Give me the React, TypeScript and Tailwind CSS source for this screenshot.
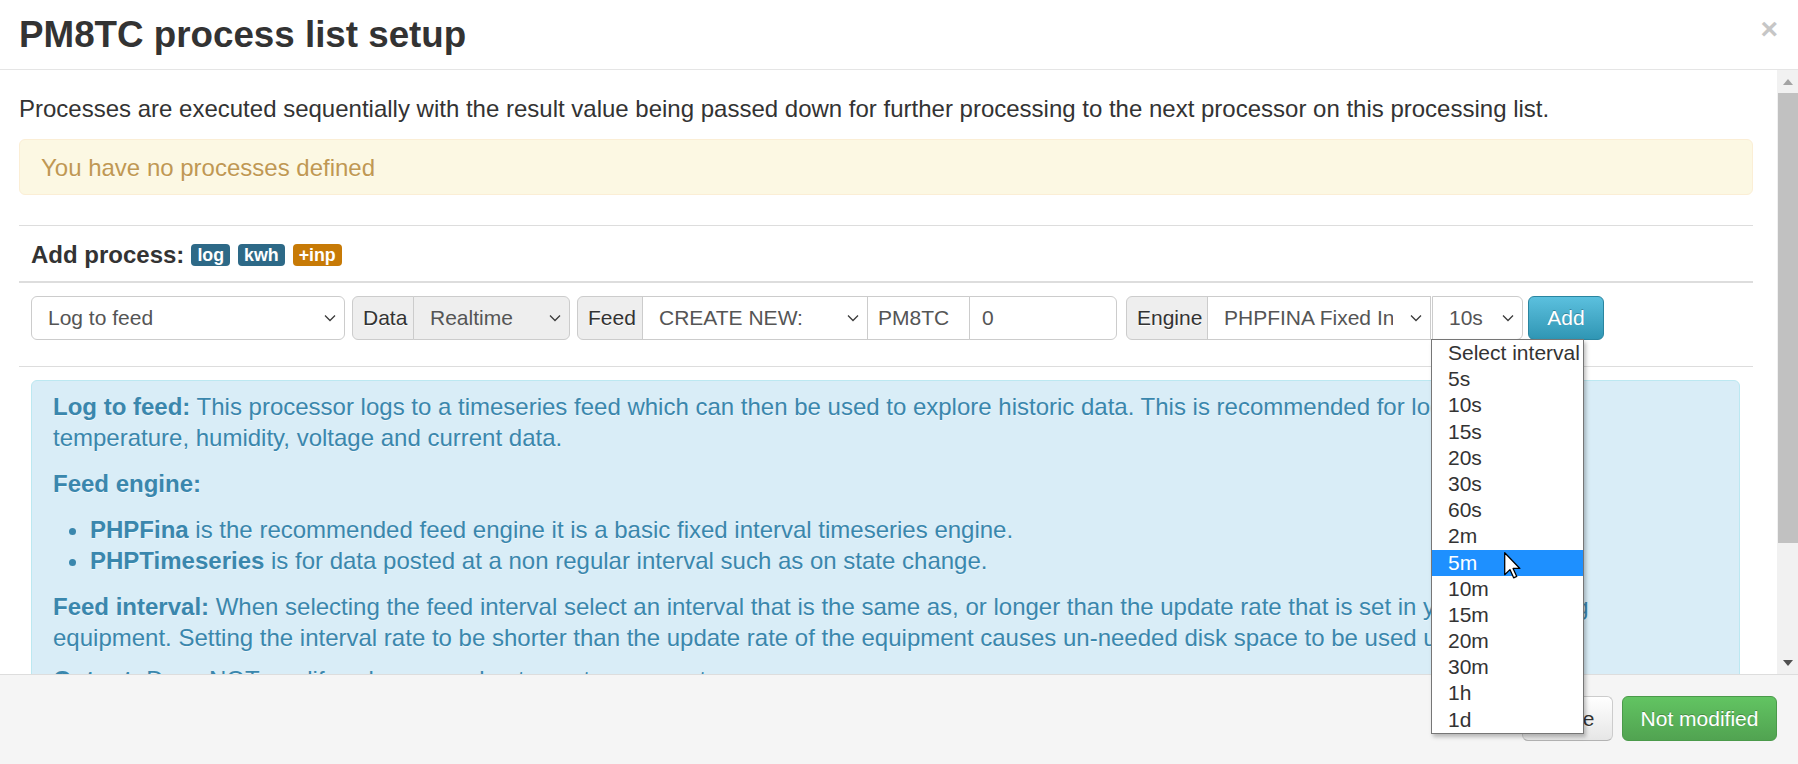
import React from "react";

// --- data ---
const INTERVALS = ["Select interval", "5s", "10s", "15s", "20s", "30s", "60s", "2m", "5m", "10m", "15m", "20m", "30m", "1h", "1d"];
const HOVERED = "5m";

function Chevron() {
  return (
    <svg width="12" height="8" viewBox="0 0 12 8" className="shrink-0">
      <path d="M1 1.5 L6 6.5 L11 1.5" stroke="#3b3b3b" strokeWidth="1.3" fill="none" />
    </svg>
  );
}

function Addon({ label, w }: { label: string; w: string }) {
  return (
    <div className={`${w} h-[44px] shrink-0 flex items-center pl-[10px] bg-[#eeeeee] border border-[#cccccc] rounded-l-[6px] text-[#333] [text-shadow:0_1px_0_#fff]`}>
      {label}
    </div>
  );
}

function Select({ text, w, textW, className = "" }: { text: string; w: string; textW?: string; className?: string }) {
  return (
    <div className={`${w} h-[44px] shrink-0 flex items-center justify-between pl-[16px] pr-[8px] border border-[#cccccc] text-[#555] ${className}`}>
      <span className={`${textW ?? ""} overflow-hidden whitespace-nowrap`}>{text}</span>
      <Chevron />
    </div>
  );
}

function TextBox({ value, w, className = "" }: { value: string; w: string; className?: string }) {
  return (
    <div className={`${w} h-[44px] shrink-0 flex items-center pl-[10px] border border-[#cccccc] bg-white text-[#555] ${className}`}>
      {value}
    </div>
  );
}

function Badge({ text, color }: { text: string; color: string }) {
  return (
    <span className={`${color} text-white font-bold text-[17.8px] leading-[20px] px-[6px] py-[1px] rounded-[4px]`}>{text}</span>
  );
}

function Scrollbar() {
  return (
    <div className="w-[21px] shrink-0 bg-[#f1f1f1] flex flex-col items-center">
      <div className="h-[23px] w-full flex items-center justify-center">
        <svg width="10" height="6" viewBox="0 0 10 6"><path d="M0 6 L5 0 L10 6 Z" fill="#a3a3a3" /></svg>
      </div>
      <div className="w-[20px] ml-[1px] h-[450px] bg-[#c1c1c1]" />
      <div className="flex-1" />
      <div className="h-[23px] w-full flex items-center justify-center">
        <svg width="10" height="6" viewBox="0 0 10 6"><path d="M0 0 L5 6 L10 0 Z" fill="#505050" /></svg>
      </div>
    </div>
  );
}

export default function App() {
  return (
    <div className="relative w-[1798px] h-[764px] overflow-hidden bg-white font-['Liberation_Sans',Arial,sans-serif] text-[21px] leading-[30px] text-[#333]">
      {/* header */}
      <header className="h-[70px] border-b border-[#e5e5e5] flex items-center justify-between pl-[19px] pr-[20px]">
        <h3 className="text-[36.75px] font-bold leading-[60px] text-[#333]">PM8TC process list setup</h3>
        <span className="text-[30px] font-bold leading-none text-[#c6c6c6] -mt-[11px]">×</span>
      </header>

      {/* body */}
      <div className="flex h-[604px]">
        <div className="flex-1 overflow-hidden pl-[19px] pr-[24px] pt-[23px] text-[24px] leading-[31px]">
          <p className="mb-[15px]">
            Processes are executed sequentially with the result value being passed down for further processing to the next processor on this processing list.
          </p>
          <div className="h-[56px] flex items-center pl-[21px] pr-[52px] bg-[#fcf8e3] border border-[#fbeed5] rounded-[6px] text-[#c09853] [text-shadow:0_1px_0_rgba(255,255,255,0.5)]">
            You have no processes defined
          </div>

          <div className="mt-[30px] border-t border-[#dddddd] h-[56px] flex items-center gap-[7px] pl-[12px] pt-[2px]">
            <span className="font-bold text-[#333]">Add process:</span>
            <div className="flex items-center gap-[8px]">
              <Badge text="log" color="bg-[#2d6987]" />
              <Badge text="kwh" color="bg-[#2d6987]" />
              <Badge text="+inp" color="bg-[#c77a06]" />
            </div>
          </div>

          <div className="border-t-2 border-[#dddddd] pt-[13px] pb-[26px] pl-[12px] flex items-center text-[21px] leading-[30px]">
            <Select text="Log to feed" w="w-[314px]" className="rounded-[6px] bg-white" />
            <div className="flex ml-[7px]">
              <Addon label="Data" w="w-[62px]" />
              <Select text="Realtime" w="w-[157px]" className="-ml-px rounded-r-[6px] bg-[#eeeeee]" />
            </div>
            <div className="flex ml-[7px]">
              <Addon label="Feed" w="w-[66px]" />
              <Select text="CREATE NEW:" w="w-[226px]" className="-ml-px bg-white" />
              <TextBox value="PM8TC" w="w-[103px]" className="-ml-px" />
              <TextBox value="0" w="w-[148px]" className="-ml-px rounded-r-[6px] pl-[12px]" />
            </div>
            <div className="flex ml-[9px]">
              <Addon label="Engine" w="w-[82px]" />
              <Select text="PHPFINA Fixed Interval" textW="w-[169px]" w="w-[224px]" className="-ml-px bg-white" />
              <Select text="10s" w="w-[91px]" className="ml-[1px] rounded-r-[6px] bg-white" />
            </div>
            <button className="ml-[5px] w-[76px] h-[44px] rounded-[6px] text-white border border-[#2a85a0] bg-gradient-to-b from-[#5bc0de] to-[#2f96b4] [text-shadow:0_-1px_0_rgba(0,0,0,0.25)]">
              Add
            </button>
          </div>

          <div className="border-t border-[#dddddd] pt-[13px] px-[12px] pr-[13px]">
            <div className="bg-[#d9edf7] border border-[#bce8f1] rounded-[6px] pt-[10px] pl-[21px] pr-[52px] text-[#3a87ad] [text-shadow:0_1px_0_rgba(255,255,255,0.5)]">
              <p className="mb-[15px]">
                <strong>Log to feed:</strong> This processor logs to a timeseries feed which can then be used to explore historic data. This is recommended for logging power, temperature, humidity, voltage and current data.
              </p>
              <p className="mb-[15px]"><strong>Feed engine:</strong></p>
              <ul className="mb-[15px] pl-[37px] list-disc">
                <li><strong>PHPFina</strong> is the recommended feed engine it is a basic fixed interval timeseries engine.</li>
                <li><strong>PHPTimeseries</strong> is for data posted at a non regular interval such as on state change.</li>
              </ul>
              <p className="mb-[11px]">
                <strong>Feed interval:</strong> When selecting the feed interval select an interval that is the same as, or longer than the update rate that is set in your monitoring equipment. Setting the interval rate to be shorter than the update rate of the equipment causes un-needed disk space to be used up.
              </p>
              <p className="mb-[15px]"><strong>Output:</strong> Does NOT modify value passed onto next process step.</p>
            </div>
          </div>
        </div>
        <Scrollbar />
      </div>

      {/* footer */}
      <footer className="h-[90px] bg-[#f5f5f5] border-t border-[#dddddd] flex justify-end items-start gap-[9px] pt-[21px] pr-[21px]">
        <button className="w-[91px] h-[45px] rounded-[6px] border border-[#cccccc] border-b-[#b3b3b3] bg-gradient-to-b from-white to-[#e6e6e6] text-[#333] [text-shadow:0_1px_1px_rgba(255,255,255,0.75)]">
          Close
        </button>
        <button className="w-[155px] h-[45px] rounded-[6px] border border-[#4a9a4a] bg-gradient-to-b from-[#62c462] to-[#51a351] text-white [text-shadow:0_-1px_0_rgba(0,0,0,0.25)]">
          Not modified
        </button>
      </footer>

      {/* open select popup */}
      <div className="absolute left-[1431px] top-[339px] w-[153px] bg-white border border-[#767676] shadow-[2px_3px_4px_rgba(0,0,0,0.25)] text-[21px] leading-[26.2px]">
        {INTERVALS.map((iv) => (
          <div key={iv} className={iv === HOVERED ? "pl-[16px] h-[26.2px] bg-[#1e90ff] text-white" : "pl-[16px] h-[26.2px] text-[#333]"}>
            {iv}
          </div>
        ))}
      </div>

      {/* mouse pointer */}
      <svg className="absolute left-[1504px] top-[552px]" width="17" height="27" viewBox="0 0 12 19">
        <path d="M0.5 0.5 L0.5 16 L4.2 12.4 L6.8 18.2 L9 17.2 L6.4 11.6 L11.2 11.6 Z" fill="#fff" stroke="#000" strokeWidth="0.9" strokeLinejoin="round" />
      </svg>
    </div>
  );
}
